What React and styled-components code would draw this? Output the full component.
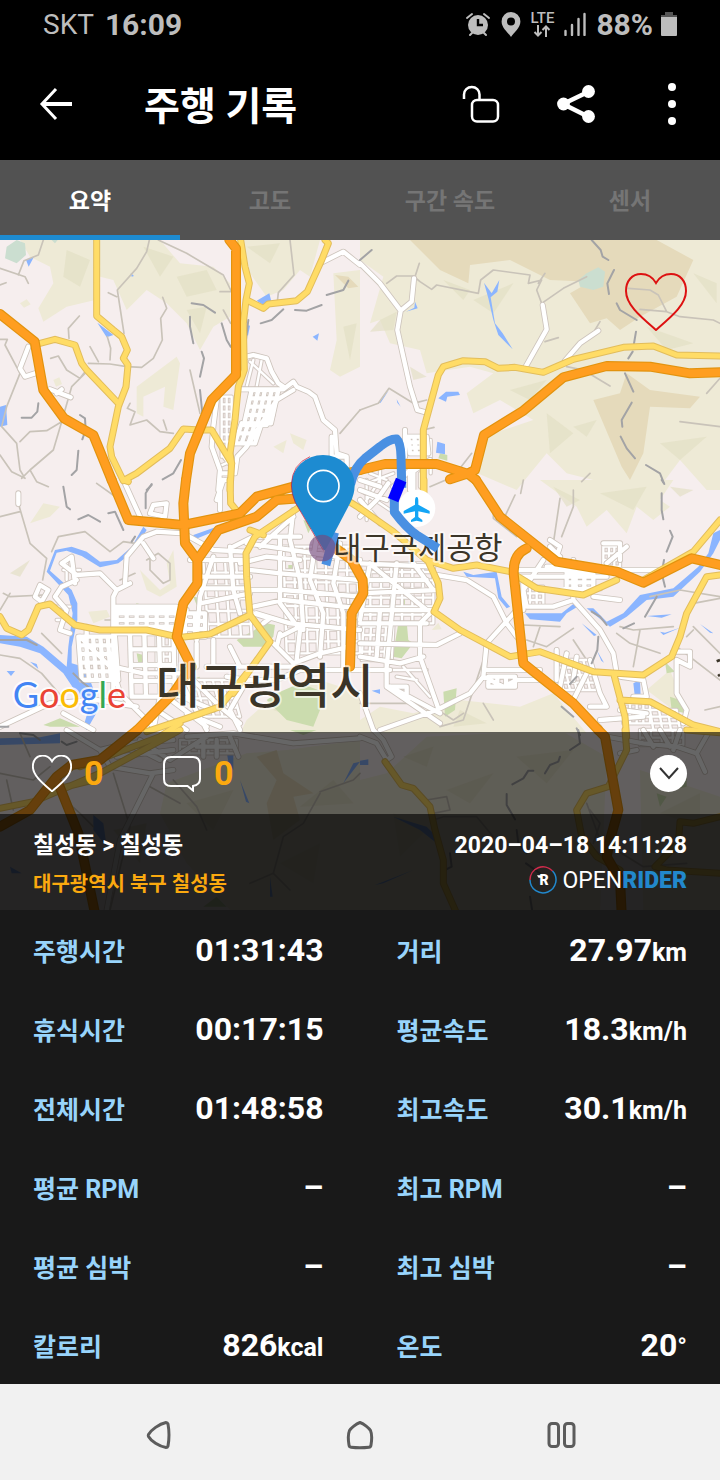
import { useState } from 'react';
import styled, { createGlobalStyle } from 'styled-components';

const TABS = ['요약', '고도', '구간 속도', '센서'];

const STATS = [
  { label: '주행시간', value: '01:31:43' },
  { label: '거리', value: '27.97', unit: 'km' },
  { label: '휴식시간', value: '00:17:15' },
  { label: '평균속도', value: '18.3', unit: 'km/h' },
  { label: '전체시간', value: '01:48:58' },
  { label: '최고속도', value: '30.1', unit: 'km/h' },
  { label: '평균 RPM', value: '–' },
  { label: '최고 RPM', value: '–' },
  { label: '평균 심박', value: '–' },
  { label: '최고 심박', value: '–' },
  { label: '칼로리', value: '826', unit: 'kcal' },
  { label: '온도', value: '20', unit: '°' },
];

// a block of city streets: cols x rows cells, leaning by skew
const grid = (x, y, w, h, cols, rows, skew = 0) => {
  let d = '';
  for (let i = 0; i <= cols; i++) {
    const gx = x + Math.round((w * i) / cols);
    d += `M${gx} ${y}L${gx + skew} ${y + h}`;
  }
  for (let i = 0; i <= rows; i++) {
    const gy = y + Math.round((h * i) / rows);
    const gx = x + Math.round((skew * i) / rows);
    d += `M${gx} ${gy}h${w}`;
  }
  return d;
};

// the map is cut in tiles, every path is in its own tile's coordinates
const TILES = [
  {
    x: 0,
    y: 0,
    land: 'M60 0H285V180L200 200 130 245 115 205 160 130 150 80 90 50zM300 0H480L540 70 640 80 690 130 690 230 640 260 600 330 560 250 500 190 440 150 380 210 340 120 300 110zM730 0H960L930 110 900 90 850 150 800 170 750 100zM410 440L530 350 540 370 520 510 490 500 495 440 430 470 430 530 410 520zM1000 100L1080 90V380L1020 410 990 390 1010 300zM820 620L860 600 850 640zM870 580L920 600 910 630 880 610zM60 190l20 -12 12 15 -20 10zM160 420l18 -8 8 20 -18 8z',
    shade: 'M200 30L270 60 240 140 190 110zM430 20L520 50 480 110zM530 110L620 90 650 150 560 170zM560 210L620 200 600 280zM740 20L840 10 810 70zM1030 260L1070 250 1050 360z',
    tan: 'M1005 105l40 5 30 30-30 5z',
    park: 'M20 20L50 0 75 10 78 45 50 70 15 55zM155 0h18l-8 10z',
    water: 'M78 60L102 50 86 80zM392 98L402 108 395 110zM292 248L340 285 320 292zM770 182L808 160 815 188 790 195zM938 290L957 280 952 302zM742 255l8 2-6 30-6-4zM0 500l18-5 4 60-22 5z',
    path: 'M0 85L75 110 85 130M55 105L72 62 115 45 130 0M0 135L18 128M448 0L440 35 410 85 352 150 372 280M325 158L350 170M475 0L560 40 670 105 692 150M660 155H705M870 0L882 105 835 158 832 185M488 172L500 205 482 235 487 300 460 355 425 382 380 380 330 372 265 370M238 228L205 265 207 295M152 355L175 348 200 390 240 415 255 395M270 320L295 365M322 290L332 325 330 360M0 298H22L15 315 60 400 20 500 5 560 50 610 60 690 75 715 35 695 0 645M60 605L90 575 140 572 185 545 215 440 255 400M185 545L160 630 90 690 65 715M90 690L110 725 145 740M570 390L600 520M390 490L382 505 405 515 390 555 440 540 480 575 520 580M490 540l10 30M670 210L692 250M1080 510L1020 580',
    rail: 'M575 190L610 195 645 218M570 230L570 260 580 310M605 335L612 355 600 410M600 450L607 520M665 250L680 300 692 320M745 240L738 300M980 165L1030 150 1045 122M885 210L920 212 965 195M850 208L815 240 782 250M65 533H95L112 515 115 490M240 525L255 535 257 570 247 598M235 632L230 690 215 705M543 660L520 700 488 718M455 735L440 750',
    street: 'M85 320L60 385 75 410 105 400M150 448L212 472M170 460l15 -12M960 70L1030 35 1080 75M740 350L760 345 800 355 815 395 835 430 850 440M720 448H850L880 425 890 440 925 455 945 470 970 540 1005 570 1010 640 1040 650 1040 680M880 450L830 480 800 555H730M830 480L740 620 712 650 705 700M995 590V650H1035M650 480L640 560 635 620 660 690 655 750M660 700H690M665 720H685' + grid(755, 450, 80, 100, 4, 4, -22) + grid(725, 550, 60, 60, 3, 2, -20),
    thin: grid(665, 470, 30, 180, 2, 8, 0) + 'M760 360L740 440M785 360L770 440M750 365L820 430M670 650L700 690M655 680L690 665',
    yellow: 'M290 0V228L340 270 365 290 382 330 370 355 384 375 378 440 355 500 330 620 335 650 370 722M120 310L165 298 225 315 245 370 260 390 355 490M370 722L410 700 510 625 550 567 600 570 635 570 695 670M722 0L735 80 748 130 738 180 730 250 733 390 715 440 705 540 690 640 695 670 690 750M740 180L790 205 805 192 890 182 922 155 965 60 985 10 975 0',
    orange: 'M0 222L104 305 130 450 192 535 280 585 335 720M688 0L708 25V405L635 480 570 640 558 720',
  },
  {
    x: 1080,
    y: 0,
    land: 'M80 0H1080V750H1040L960 660 900 740H780L620 700 560 640 470 750 330 690 370 590 520 540 420 480 340 520 320 460 400 400 330 380 200 400 180 330 90 310 60 240 30 250 70 110 0 60V0z',
    shade: 'M340 180L460 130 400 220zM250 120L330 150 310 180zM60 240L110 215 100 270 30 275zM150 380L200 410 160 420zM860 260L1000 310 920 330zM450 450L560 420 510 480zM560 520L640 580 570 640zM900 610L1040 590 960 660zM640 560l70-20-30 50zM1000 100l70 30v60z',
    tan: 'M150 0H890L1000 60 950 170 840 230 780 270 740 235 690 250 630 160 690 125 570 120 450 60 330 75 325 130 240 90zM700 480L780 460 800 400 870 450 1020 470 990 505 870 500 850 640 810 720 785 680z',
    park: 'M680 100L715 82 735 95 730 140 700 150 660 140 655 120z',
    green: 'M240 640L262 645 262 662 235 655z',
    water: 'M372 128L395 160 418 120 412 155 392 172 405 250 428 280 458 328 415 285 400 240 385 175zM235 475L258 455 295 455 300 465 262 470 258 485zM232 605L255 612 255 643 228 638zM165 185l8 20-35 10 25-12zM55 490l32-40-25 38zM110 478l12 22-10-12z',
    path: 'M80 130L110 108H160L180 125 215 148 230 135 355 160 362 120 400 90 510 105 505 130 545 120 530 150 545 190M165 110L178 70M545 190L610 145 680 110M555 100L535 130M555 305L595 293M805 145L870 150 895 165 920 215M840 208L920 215 960 230 1060 240 1080 250M0 510L55 490 87 445 160 490 200 480M720 245L705 270M620 380L670 390 750 438M960 545L1080 560M1080 415L1040 460M335 640L280 710 210 740M690 700L665 725M190 570L222 562',
    rail: 'M35 30L0 60M695 0L722 30 728 50 745 60M762 90L742 130 747 162M770 190L780 210 830 240M828 275L822 310M818 335L805 355M795 400L820 455M815 488L785 540 787 560M782 590L800 625 825 655M858 675L900 700 912 730',
    street: 'M0 70L60 130 122 212 112 270 150 440 172 510 200 518M122 212L155 185 162 115M548 195L560 268 497 380M615 362L660 310 715 272M135 570V650M100 740L150 690M150 750V700L210 660M160 690V750M0 720L60 740' + grid(145, 590, 55, 50, 3, 3, 5),
    thin: 'M30 700L80 720M60 690V740M20 730L100 700M180 700V740M212 600V700',
    yellow: 'M190 750V570L235 405 250 380 310 362 375 365 415 385 465 382 550 397 640 358 790 322 880 318 950 345 1080 348',
    orange: 'M0 690L75 672H230L325 702 348 720M270 718L325 700 345 690 372 585 490 512 610 412 740 378 870 380 990 400 1080 397',
  },
  {
    x: 0,
    y: 720,
    land: 'M90 130L130 70 180 80 150 110zM420 270L440 330 480 350 530 320 520 210 500 250 510 310 480 330 450 300zM740 720L830 640 960 600 1080 640V760H720zM265 395L320 390 330 410 280 430z',
    shade: 'M30 280l60-40-30 50zM820 690L880 650 900 720z',
    green: 'M710 480L800 430 825 435 820 470 790 500 730 500zM830 640L900 610 980 640 940 740 860 720 800 660zM865 255h15v35h-15zM580 350l30 5-20 20zM410 520l20 5v45l-15-20zM130 735L180 715 240 740H150zM450 380l-40-10-15 15zM560 600l40-10-10 30zM910 120l30 10-15 30z',
    water: 'M0 465L80 470 130 500 200 560 205 500 218 400 205 345 140 275 165 210 215 200 260 215 300 245 350 240 395 200 430 140 440 150 400 215 355 250 300 262 245 228 200 212 170 218 150 272 215 330 232 370 232 420 215 500 215 550 250 560 270 600 300 680 260 750 250 740 265 690 230 640 190 580 120 520 60 500 0 490zM20 573h25l-12 15zM90 545l25 22-5-15zM580 165L650 140 640 155 580 180z',
    path: 'M60 95L0 110M55 70L90 190 140 235 128 300M155 215L175 170 255 155 330 215 370 185 405 190M10 340L30 350 130 345M0 390L30 340M125 460L185 520M0 525L60 535 125 580 185 650M250 500l45 30M360 300l45-20M340 420h-25M290 10L360 60M940 10L1000 60M440 240L475 220 510 250V300L490 310 450 270 450 230',
    rail: 'M190 20L200 80 210 88M235 118L265 105 300 125M325 100L345 95 370 150M455 12L437 40V85M405 170l-10 15M0 480H80L110 495M220 580L245 605 270 625M0 740H25',
    street: 'M370 0L420 110M55 40V72M120 315L105 350 125 365 145 330zM390 310L350 330 340 350V650M350 330L300 280 230 285 185 250 215 230 225 310M185 320L230 300M185 320L165 350 200 390 180 450 210 460M375 310L380 230 430 170 470 155 550 160 640 210 740 215M430 190L460 235M450 100L460 75 500 70 495 110zM340 390H560M340 420H560M340 450H540M260 440V560M340 560L430 580H540M240 470L340 570 360 640 460 740M0 740L150 670 290 660 410 680M620 0M650 60L670 0M660 90V0M640 230L600 350 590 480M570 240H740M600 290H750M600 325H740M600 370L750 340M690 200L700 330 720 400M740 190L1080 240M750 270L840 280 1080 300M750 330H850L1080 350M760 380L850 360 1080 385M770 400L870 430 1080 450M840 170V370L900 450 890 540M880 90L870 180 900 300 910 450M950 170L930 300 970 400 960 530M1020 190L1000 310 1030 400V560M840 470L900 440M820 490L880 550 960 520 1050 500M840 460L830 500M590 490V560M640 480V560M690 500L720 560M620 560H880M760 400L810 415 790 430M540 600L620 750M580 600L660 680 720 730M680 590L740 600 830 600 900 570H1080M730 620L690 690 720 750M500 650L620 740M470 690L560 750M520 640L640 690M560 700L660 740M700 200L760 170 900 170M880 110L780 200M720 250L800 230 900 240M480 650L460 750M190 700L280 750' + grid(350, 380, 180, 80, 6, 4) + grid(235, 470, 110, 130, 5, 5, 10) + grid(390, 460, 130, 190, 3, 4, 5) + grid(555, 400, 60, 70, 2, 3),
    thin: grid(610, 240, 130, 230, 4, 6, 15) + grid(850, 200, 220, 320, 7, 9, 10) + grid(470, 470, 60, 120, 3, 4) + grid(560, 600, 130, 110, 5, 4, 30) + 'M190 270L240 270M200 240V300M165 380H210M170 420H200M250 480V560M290 480V570M330 470V600',
    yellow: 'M370 0L385 5M0 410L20 445 65 465 85 450 115 380 150 372 225 435 300 450 440 450 530 470M545 472L630 462 750 405 740 290 738 220 765 170 900 80M690 0L692 70 725 110M750 150L790 165M750 405L810 485 700 640M440 755L560 715 660 680 740 580M1040 60L1080 85',
    orange: 'M335 0L385 120 550 135 720 100 770 50 880 20 1080 -30M558 0L550 70 555 190 592 240 655 150 770 110 830 60 900 55M592 240V310L550 370 530 470 575 560 520 640 412 750M1000 200L1055 240 1088 300 1090 340 1055 400 1050 560',
  },
  {
    x: 1080,
    y: 720,
    land: 'M540 0H940L900 60 930 80 880 120 830 80 800 160 740 90 680 140 650 80zM0 720L60 680 160 700 300 660 480 680 580 640 680 760H0zM860 630L930 570 980 700 940 690zM215 450l20-22 10 20z',
    shade: 'M580 20L660 60 620 80zM720 40L860 20 820 90zM930 20l70 10-40 20zM300 690l80 40-100 10z',
    green: 'M115 430L140 425 145 480 160 490 125 535 98 530zM930 650L960 660 975 700 935 690zM250 635L290 625 285 690 255 710zM120 350l15 5v22h-12zM915 545l30 30-25 5z',
    water: 'M1080 150L1060 160 1045 220 1015 260 940 325 840 345 790 400 740 425 700 385 680 385 750 440 800 410 860 360 940 350 1020 275 1060 220 1080 180zM495 400H605L640 372 650 382 620 400 600 425 510 418zM310 275L340 285 410 275 425 350 450 380 440 385 415 355 405 295 320 290zM820 610L840 600 842 650 825 655zM35 632l25-4v14zM665 430l45 35-8 3zM710 510l22 38-8-6zM860 408l75-5-30 10zM900 455l10 10 50-22-45 15zM1020 432l40 28-10-2z',
    path: 'M640 30V80L605 170M600 55L580 190M400 80V115L470 170 490 150M465 45L425 130M490 0l-8 40M780 440L820 450 940 440M770 460L810 490 900 520M640 445L560 500 500 480M490 435L600 440M540 440L520 500M1000 440L1080 520M840 450L820 560M980 470l20-20M950 500L1080 600M1035 690L1080 680M640 480L680 540M370 540L310 720 240 740M310 700L280 720 250 700M370 670L400 720M0 670L180 670M870 350L960 330 1080 350M1000 370l80-15',
    rail: 'M905 40V90L910 118M930 152L938 170 920 215M912 240L905 280 915 320M890 350L855 410M822 430L790 445M695 395L720 410 740 435M715 470L712 510 695 550M650 590L630 612M605 680L640 710M650 745l10 20M905 0l8 12',
    street: 'M0 110L50 60 85 10M0 60L60 130M0 30L80 60M230 285L320 300 400 350 440 430 470 470M470 390L380 490 370 590 330 640 230 690 60 750M370 590L430 620 470 600 540 600M380 570H540M470 270H900M480 290H740M550 240L490 330 500 380H580L640 360 720 450 760 520 770 580M640 240V360M490 310V390M570 180L600 200 590 230M570 200L600 230M730 190H780V240M800 200L740 250M700 290V330M700 350L780 360M540 330L720 325M560 260H700M590 510V600M620 520L600 620M650 530L640 600M690 540L720 640 740 680 690 680M680 580L640 660M940 515H990V560L950 540 950 640 980 690 970 730M780 590L850 600 860 650 820 650M780 690L860 700M720 720L850 710M0 250L220 260M0 300H200M0 340L230 330M0 390H220M0 430H200M0 490L230 495 300 460M0 530L120 550 190 530M210 400L180 430V530L240 700M80 550V620L240 730M0 640L40 750M90 620L240 700M30 250L0 420M110 250L80 560M160 250L220 330M40 260L200 390M60 390L50 530M0 570H90M90 620H140V660' + grid(385, 590, 80, 30, 3, 1) + grid(620, 260, 80, 70, 3, 3),
    thin: grid(0, 250, 220, 180, 7, 7) + grid(10, 440, 90, 100, 4, 4, -5) + grid(590, 540, 100, 90, 5, 4, 20) + grid(730, 200, 50, 60, 3, 3) + grid(790, 670, 80, 60, 4, 3) + grid(490, 320, 60, 60, 3, 3) + grid(870, 690, 80, 60, 3, 3, 10) + 'M0 30L90 90M20 0V120M60 0L0 90M130 560L210 650M90 570L200 570M110 590L170 600M640 680L720 740',
    yellow: 'M192 0V40M0 85L100 155 200 240 280 265 350 255 450 275 530 325 670 345 770 300M205 245L235 310 240 355 222 395 300 450 450 530 540 515 620 545 700 575 850 585 935 530 960 470 980 400 1040 290 1080 285M850 300L1000 215 1080 120M762 585L795 710 800 770M780 660L870 665 1000 735 1080 755',
    orange: 'M348 0L420 110 590 245 770 275 850 308 995 235 1080 255M500 205Q455 225 462 290L490 550 640 670 715 750',
  },
  {
    x: 0,
    y: 1470,
    land: 'M500 160L740 70 860 60 1080 30V550H700L560 400 480 250z',
    shade: 'M560 220L700 180 640 300zM900 230L1000 150 1060 220zM340 300L440 280 420 400zM840 400l120-60-20 120z',
    tan: 'M770 80L830 60 850 130 940 190 880 200 900 270 820 330 800 220 830 150z',
    green: 'M870 0H950L910 15zM610 530L650 500 680 530z',
    water: 'M0 25L120 22 180 10 180 40 0 45zM280 255L310 280 320 350 280 300zM680 65l20 5v50l-15-25zM720 150l28 70-10-5zM1060 100l20-5-50 65zM810 440l8 60-8 0zM30 410l35 20h-30z',
    path: 'M0 130L100 150 150 110M60 10L90 80M20 150L40 240M150 170L240 250 280 290M520 150L590 230 620 300M960 185L1060 150 1080 130M960 190L910 280 850 320 820 430 750 460M820 430L870 480M340 130L390 290 330 540M450 170L540 220',
    rail: 'M60 10L100 15 120 30M185 35L200 45 230 35',
    street: 'M200 0L300 60 380 40 520 30M300 60L330 110 450 130 520 120M420 30L510 90 620 20M460 130L360 330 320 540M610 30V80M650 30V80M690 20L715 80M590 50H700M560 20L700 10 880 40 1080 25M400 50L480 90M350 80L520 60',
    thin: grid(540, 30, 170, 40, 6, 2),
    yellow: 'M0 235L100 215 300 130 430 60 540 0M180 175L280 150M240 110L480 20 540 -20',
    orange: 'M412 0L300 90 215 105 170 140 90 240 0 290M175 160L235 310 285 550',
  },
  {
    x: 1080,
    y: 1470,
    land: 'M0 150L80 130 200 20 600 0 740 80 720 550H0zM840 120L1080 200V550H850z',
    shade: 'M130 80L220 50 200 110zM260 180L400 130 330 220zM470 80L640 60 560 160zM100 250L200 300 120 380zM900 250l120-60v100z',
    green: 'M950 150l30-10v30l-20 5zM890 190l30 10-20 30z',
    water: 'M0 92L25 88 25 105 0 105zM100 260L200 290 240 330 230 340 180 300zM45 465L160 420 70 460zM680 180l60-15-50 20z',
    path: 'M200 210L260 200 270 240 220 250M680 220L720 330 850 410 980 400M690 240L720 280 700 340M700 360L740 380M220 270L250 260 350 260 400 320',
    rail: 'M655 0L660 40 630 60M600 80L595 95 570 105 555 130M520 122H505L490 145 457 163M440 192V225L465 268M470 300L475 340 500 370M498 400L540 430M510 500l8 50M270 370l5 40-20 10',
    street: 'M0 20L50 40 80 90 95 80 70 30 40 0M740 20L850 40 950 50 1010 70 1035 125M850 0L880 50M900 0L930 50M960 0L940 60M1010 70L1050 0M780 70L830 60',
    thin: grid(840, 0, 130, 45, 4, 2),
    yellow: 'M75 95L125 165 160 175 210 230 225 300 250 390 250 460 290 550M795 0L800 60 745 170 680 190 650 240 665 320 710 380 780 420M1080 260L1000 280 960 275 955 340 885 410 920 420 1080 430M980 0L1080 8',
    orange: 'M715 0L735 20 755 130 775 240 750 330 740 380 780 450 785 550',
  },
];

const ROADS = [
  { key: 'path', fill: '#c9c3b9', width: 5 },
  { key: 'thin', casing: '#d3c9c3', casingWidth: 13, fill: '#ffffff', width: 7 },
  { key: 'street', casing: '#cdc4bc', casingWidth: 18, fill: '#ffffff', width: 13 },
  { key: 'rail', fill: '#a3a3a5', width: 6 },
  { key: 'yellow', casing: '#e2bd5c', casingWidth: 21, fill: '#ffdc66', width: 15 },
  { key: 'orange', casing: '#e2930f', casingWidth: 30, fill: '#ff9e20', width: 23 },
];

const AREAS = [
  { key: 'land', fill: '#eeead6' },
  { key: 'tan', fill: '#e5dabb' },
  { key: 'shade', fill: '#e2dec3', opacity: 0.65 },
  { key: 'green', fill: '#cbdcae' },
  { key: 'park', fill: '#cbded0' },
  { key: 'water', fill: '#8bb5ff' },
];

const GOOGLE = [
  ['G', '#4285f4'],
  ['o', '#ea4335'],
  ['o', '#fbbc05'],
  ['g', '#4285f4'],
  ['l', '#34a853'],
  ['e', '#ea4335'],
];

const HEART =
  'M31 10C27 3 21 1 16 1 7 1 1 8 1 18c0 14 15 26 30 39 15-13 30-25 30-39C61 8 55 1 46 1c-5 0-11 2-15 9z';

function RideMap() {
  return (
    <MapDrawing viewBox="0 0 2160 2010" role="img" aria-label="주행 경로 지도">
      <rect width="2160" height="2010" fill="#f6eeee" />
      {AREAS.map(area =>
        TILES.map(tile => (
          <path
            key={`${area.key}-${tile.x}-${tile.y}`}
            d={tile[area.key]}
            transform={`translate(${tile.x} ${tile.y})`}
            fill={area.fill}
            opacity={area.opacity}
          />
        )),
      )}
      {ROADS.map(road => (
        <g key={road.key} fill="none" strokeLinejoin="round">
          {road.casing &&
            TILES.map(tile => (
              <path
                key={`casing-${tile.x}-${tile.y}`}
                d={tile[road.key]}
                transform={`translate(${tile.x} ${tile.y})`}
                stroke={road.casing}
                strokeWidth={road.casingWidth}
                strokeLinecap="round"
              />
            ))}
          {TILES.map(tile => (
            <path
              key={`fill-${tile.x}-${tile.y}`}
              d={tile[road.key]}
              transform={`translate(${tile.x} ${tile.y})`}
              stroke={road.fill}
              strokeWidth={road.width}
              strokeLinecap="round"
            />
          ))}
        </g>
      ))}

      <path d="M2150 1264l10-4M2154 1308l6-4" stroke="#3b3528" strokeWidth="8" />
      <MapLabel x="468" y="1390" $size={142} $weight={500}>
        대구광역시
      </MapLabel>
      <MapLabel x="1000" y="957" $size={92} $weight={400}>
        대구국제공항
      </MapLabel>

      {/* airport */}
      <circle cx="1250" cy="805" r="56" fill="#ffffff" />
      <path
        d="M1250 771q5 0 5 13v10l34 19v8l-34-7v17l12 9v6l-17-4-17 4v-6l12-9v-17l-34 7v-8l34-19v-10q0-13 5-13z"
        fill="#14a5f5"
      />

      <g transform="translate(840 540)">
        <path
          d="M141 422L160 350M215 180Q225 140 255 115L300 80Q330 55 350 57 362 68 363 110L365 190M343 240V276Q380 325 410 345L462 378"
          fill="none"
          stroke="#4a90e2"
          strokeWidth="27"
          strokeLinecap="square"
          strokeLinejoin="round"
        />
        <path d="M348 173L379 187 355 247 324 234z" fill="#0000ff" />
        <path
          d="M132 391L46 248Q34 222 34 195A95 90 0 0 1 224 195Q224 222 210 250L136 391z"
          fill="#1d8bd1"
        />
        <path d="M130 391L46 248Q34 220 34 195Q36 132 90 110" fill="none" stroke="#c91437" strokeWidth="2" />
        <circle cx="130" cy="198" r="47" fill="none" stroke="#ffffff" strokeWidth="5" />
        <circle cx="127" cy="384" r="40" fill="#75497d" opacity="0.65" />
      </g>

      <GoogleMark x="38" y="1405">
        {GOOGLE.map(([letter, color], i) => (
          <tspan key={i} fill={color}>
            {letter}
          </tspan>
        ))}
      </GoogleMark>
    </MapDrawing>
  );
}

function StatusBar() {
  return (
    <StatusRow>
      <Carrier>
        <span>SKT</span>
        <strong>16:09</strong>
      </Carrier>
      <StatusIcons>
        <svg width="26" height="25" viewBox="0 0 26 25">
          <path
            d="M2 6l5-4M24 6l-5-4M5 23l4-4M21 23l-4-4"
            stroke="#bdbdbd"
            strokeWidth="2"
            strokeLinecap="round"
          />
          <circle cx="13" cy="13" r="10" fill="#bdbdbd" />
          <path d="M13 7v6h5" fill="none" stroke="#000" strokeWidth="2.4" />
        </svg>
        <svg width="20" height="25" viewBox="0 0 20 25">
          <path
            d="M10 0a9.400 9.400 0 0 0-9.400 9.400C.6 16 7 20 10 25c3-5 9.400-9 9.400-15.600A9.400 9.400 0 0 0 10 0zm0 5.500a4 4 0 1 1 0 8 4 4 0 0 1 0-8z"
            fill="#bdbdbd"
          />
        </svg>
        <Lte>
          LTE
          <svg width="18" height="12" viewBox="0 0 18 12">
            <path
              d="M5 0v10M1.500 7L5 10.500 8.500 7M13 12V2M9.500 5L13 1.500 16.500 5"
              fill="none"
              stroke="#bdbdbd"
              strokeWidth="2"
            />
          </svg>
        </Lte>
        <svg width="22" height="24" viewBox="0 0 22 24">
          <path
            d="M1.500 19v4M8 13v10M14.500 7v16M20.500 2v21"
            stroke="#bdbdbd"
            strokeWidth="2.400"
            strokeLinecap="round"
          />
        </svg>
        <Battery>
          88%
          <svg width="16" height="24" viewBox="0 0 16 24">
            <path d="M4 0h8v3h4v4H0V3h4z" fill="#555" />
            <path d="M0 5h16v18a1 1 0 0 1-1 1H1a1 1 0 0 1-1-1z" fill="#bdbdbd" />
          </svg>
        </Battery>
      </StatusIcons>
    </StatusRow>
  );
}

function App() {
  const [tab, setTab] = useState(TABS[0]);

  return (
    <Page>
      <GlobalStyle />
      <StatusBar />
      <Header>
        <IconButton aria-label="뒤로">
          <svg width="34" height="34" viewBox="0 0 34 34" fill="none" stroke="#fff">
            <path d="M33 17H3" strokeWidth="4" />
            <path d="M17 2L3 17l14 15" strokeWidth="3" />
          </svg>
        </IconButton>
        <Title>주행 기록</Title>
        <Actions>
          <IconButton aria-label="공개 설정">
            <svg width="38" height="38" viewBox="0 0 38 38" fill="none" stroke="#fff">
              <path d="M2 14V9.500C2 5 5.500 2 9.800 2s7.700 3 7.700 7.500V14" strokeWidth="2.500" />
              <rect x="10" y="15" width="26" height="21.500" rx="5" strokeWidth="2.500" />
            </svg>
          </IconButton>
          <IconButton aria-label="공유">
            <svg width="38" height="38" viewBox="0 0 38 38" fill="#fff">
              <path d="M32 6.500L6 19l26 13" fill="none" stroke="#fff" strokeWidth="4.500" />
              <circle cx="31.500" cy="6.500" r="6.400" />
              <circle cx="6.500" cy="19" r="6.400" />
              <circle cx="31.500" cy="31.500" r="6.400" />
            </svg>
          </IconButton>
          <IconButton aria-label="더 보기">
            <svg width="10" height="42" viewBox="0 0 10 42" fill="#fff">
              <circle cx="5" cy="4" r="4" />
              <circle cx="5" cy="21" r="4" />
              <circle cx="5" cy="38" r="4" />
            </svg>
          </IconButton>
        </Actions>
      </Header>

      <TabList role="tablist">
        {TABS.map(name => (
          <Tab
            key={name}
            role="tab"
            aria-selected={tab === name}
            $active={tab === name}
            onClick={() => setTab(name)}
          >
            {name}
          </Tab>
        ))}
      </TabList>

      <MapSection>
        <RideMap />
        <FavoriteButton aria-label="즐겨찾기">
          <svg width="62" height="58" viewBox="0 0 62 58" fill="none">
            <path d={HEART} stroke="#dd1111" strokeWidth="2" />
          </svg>
        </FavoriteButton>
        <MapFooter>
          <Social>
            <Counter aria-label="좋아요">
              <svg width="40" height="37" viewBox="0 0 62 58" fill="none">
                <path d={HEART} stroke="#fff" strokeWidth="3" />
              </svg>
              0
            </Counter>
            <Counter aria-label="댓글">
              <svg width="40" height="37" viewBox="0 0 40 37" fill="none">
                <path
                  d="M9 2h22q7 0 7 8v14q0 6-7 7v4.500L25.500 31H9q-7 0-7-7V10q0-8 7-8z"
                  stroke="#fff"
                  strokeWidth="2"
                />
              </svg>
              0
            </Counter>
            <ExpandButton aria-label="펼치기">
              <svg width="22" height="14" viewBox="0 0 22 14" fill="none">
                <path d="M2 2l9 10 9-10" stroke="#333" strokeWidth="2" />
              </svg>
            </ExpandButton>
          </Social>
          <Ride>
            <div>
              <RideName>칠성동 &gt; 칠성동</RideName>
              <RideAddress>대구광역시 북구 칠성동</RideAddress>
            </div>
            <RideMeta>
              <RideTime>2020–04–18 14:11:28</RideTime>
              <Brand>
                <svg width="28" height="28" viewBox="0 0 28 28" fill="none">
                  <path d="M1 14A13 13 0 0 1 23.500 5" stroke="#d12b4c" strokeWidth="1.500" />
                  <path d="M23.500 5A13 13 0 1 1 1 14" stroke="#2288cc" strokeWidth="1.500" />
                  <path d="M8 9.200h5v2.600H9.500z" fill="#fff" />
                  <BrandLetter x="10.500" y="19">
                    R
                  </BrandLetter>
                </svg>
                <span>
                  OPEN<b>RIDER</b>
                </span>
              </Brand>
            </RideMeta>
          </Ride>
        </MapFooter>
      </MapSection>

      <Stats>
        {STATS.map(({ label, value, unit }) => (
          <Stat key={label}>
            <dt>{label}</dt>
            <dd>
              {value}
              {unit && <Unit>{unit}</Unit>}
            </dd>
          </Stat>
        ))}
      </Stats>

      <SystemNav>
        <IconButton aria-label="이전 화면">
          <svg width="26" height="30" viewBox="0 0 26 30" fill="none">
            <path
              d="M20 2.500C13 4 5 10 2.500 14.500q-.5 1 0 2C5 21 13 26.500 20 27.500q1.500 0 2-1.500 2-11 0-22-.5-1.500-2-1.500z"
              stroke="#5c5c5c"
              strokeWidth="3"
            />
          </svg>
        </IconButton>
        <IconButton aria-label="홈">
          <svg width="28" height="30" viewBox="0 0 28 30" fill="none">
            <path
              d="M14 2.500C10 4 5 8 3.500 10.500 2 14 2.500 22 3 25q.3 2 2 2.200 9 1 18 0 1.700-.2 2-2.200c.5-3 1-11-.5-14.500C23 8 18 4 14 2.500z"
              stroke="#5c5c5c"
              strokeWidth="3"
            />
          </svg>
        </IconButton>
        <IconButton aria-label="최근 앱">
          <svg width="30" height="30" viewBox="0 0 30 30" fill="none" stroke="#5c5c5c" strokeWidth="3">
            <rect x="3" y="3.500" width="9.500" height="23" rx="3" />
            <rect x="18.500" y="3.500" width="9.500" height="23" rx="3" />
          </svg>
        </IconButton>
      </SystemNav>
    </Page>
  );
}

export default App;

const GlobalStyle = createGlobalStyle`
  * {
    box-sizing: border-box;
  }

  body {
    margin: 0;
    background-color: #191919;
    font-family: Roboto, 'Noto Sans CJK KR', sans-serif;
  }

  button {
    padding: 0;
    border: 0;
    background: none;
    font-family: inherit;
    cursor: pointer;
  }

  svg {
    display: block;
  }
`;

const Page = styled.main`
  width: 100%;
  color: #ffffff;
`;

const StatusRow = styled.div`
  display: flex;
  justify-content: space-between;
  align-items: center;
  height: 48px;
  padding: 0 43px;
  background-color: #000000;
  color: #bdbdbd;
`;

const Carrier = styled.div`
  display: flex;
  align-items: center;
  gap: 11px;
  font-size: 28px;

  strong {
    font-size: 30px;
    font-weight: 700;
  }
`;

const StatusIcons = styled.div`
  display: flex;
  align-items: center;
  gap: 10px;
`;

const Lte = styled.div`
  display: flex;
  flex-direction: column;
  align-items: center;
  font-size: 15px;
  font-weight: 500;
  line-height: 14px;
`;

const Battery = styled.strong`
  display: flex;
  align-items: center;
  gap: 8px;
  font-size: 30px;
  font-weight: 700;
`;

const Header = styled.header`
  display: flex;
  align-items: center;
  height: 112px;
  padding: 0 43px 0 39px;
  background-color: #000000;
`;

const IconButton = styled.button`
  display: flex;
  justify-content: center;
  align-items: center;
`;

const Title = styled.h1`
  margin: 0 0 0 71px;
  padding-top: 6px;
  font-size: 39px;
  font-weight: 700;
  line-height: 48px;
`;

const Actions = styled.div`
  display: flex;
  align-items: center;
  gap: 57px;
  margin-left: auto;

  button:last-child {
    margin-left: 15px;
  }
`;

const TabList = styled.div`
  display: grid;
  grid-template-columns: repeat(4, 1fr);
  height: 80px;
  background-color: #525252;
`;

const Tab = styled.button`
  border-top: 2px solid transparent;
  border-bottom: 5px solid ${({ $active }) => ($active ? '#1d8bd1' : 'transparent')};
  color: ${({ $active }) => ($active ? '#ffffff' : '#757575')};
  font-size: 23px;
  font-weight: 700;
`;

const MapSection = styled.section`
  position: relative;
`;

const MapDrawing = styled.svg`
  width: 100%;
  height: auto;
`;

const MapLabel = styled.text`
  fill: #3b3528;
  stroke: rgba(255, 255, 255, 0.6);
  stroke-width: 12px;
  stroke-linejoin: round;
  paint-order: stroke;
  font-family: 'Noto Sans CJK KR', sans-serif;
  font-size: ${({ $size }) => $size}px;
  font-weight: ${({ $weight }) => $weight};
`;

const GoogleMark = styled.text`
  stroke: rgba(255, 255, 255, 0.8);
  stroke-width: 12px;
  stroke-linejoin: round;
  paint-order: stroke;
  font-family: Lato, sans-serif;
  font-size: 108px;
  font-weight: 400;
`;

const FavoriteButton = styled.button`
  position: absolute;
  top: 33px;
  right: 33px;
`;

const MapFooter = styled.div`
  position: absolute;
  right: 0;
  bottom: 0;
  left: 0;
`;

const Social = styled.div`
  display: flex;
  align-items: center;
  height: 82px;
  padding: 0 33px 0 32px;
  background-color: rgba(0, 0, 0, 0.6);
`;

const Counter = styled.button`
  display: flex;
  align-items: center;
  gap: 12px;
  width: 130px;
  color: #fba90f;
  font-size: 34px;
  font-weight: 700;
`;

const ExpandButton = styled.button`
  display: flex;
  justify-content: center;
  align-items: center;
  width: 37px;
  height: 37px;
  margin-left: auto;
  border-radius: 50%;
  background-color: #ffffff;
`;

const Ride = styled.div`
  display: flex;
  justify-content: space-between;
  height: 96px;
  padding: 14px 33px;
  background-color: rgba(0, 0, 0, 0.85);
`;

const RideName = styled.h2`
  margin: 0;
  font-size: 23px;
  font-weight: 700;
  line-height: 36px;
`;

const RideAddress = styled.p`
  margin: 0;
  color: #fba90f;
  font-size: 20px;
  font-weight: 700;
  line-height: 40px;
`;

const RideMeta = styled.div`
  display: flex;
  flex-direction: column;
  align-items: flex-end;
`;

const RideTime = styled.time`
  font-size: 23px;
  font-weight: 700;
  line-height: 36px;
`;

const Brand = styled.div`
  display: flex;
  align-items: center;
  gap: 5px;
  height: 36px;
  font-size: 23px;
  font-weight: 400;

  b {
    color: #2288cc;
    font-weight: 900;
  }
`;

const BrandLetter = styled.text`
  fill: #ffffff;
  font-size: 14px;
  font-weight: 900;
`;

const Stats = styled.dl`
  display: grid;
  grid-template-columns: 1fr 1fr;
  column-gap: 73px;
  margin: 0;
  padding: 0 33px;
  background-color: #191919;
`;

const Stat = styled.div`
  display: flex;
  justify-content: space-between;
  align-items: center;
  height: 79px;

  dt {
    color: #98d4fb;
    font-size: 25px;
    font-weight: 700;
  }

  dd {
    margin: 0;
    font-size: 32px;
    font-weight: 700;
  }
`;

const Unit = styled.span`
  font-size: 25px;
`;

const SystemNav = styled.nav`
  display: grid;
  grid-template-columns: repeat(3, 1fr);
  height: 96px;
  padding: 6px 58px 0;
  background-color: #f1f1f1;
`;
